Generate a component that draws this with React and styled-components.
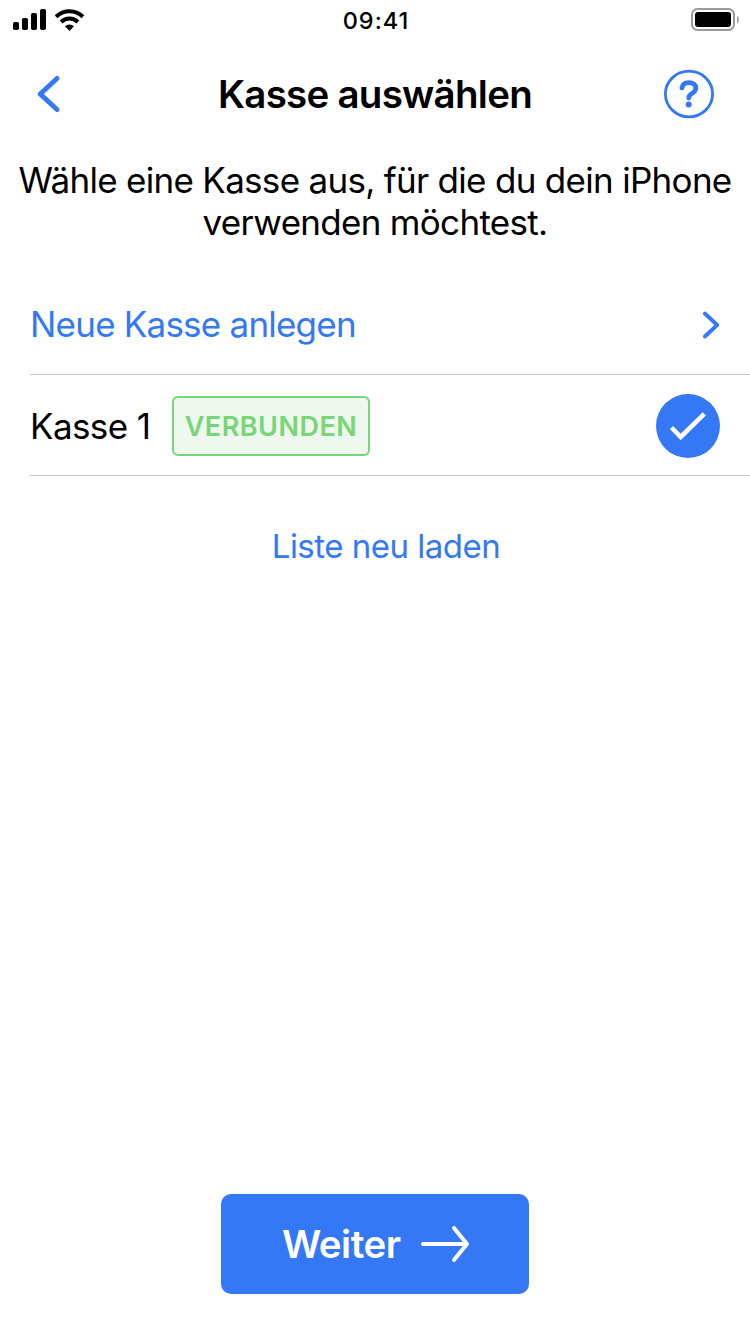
import styled, { createGlobalStyle } from 'styled-components';

const blue = '#3478f6';

const GlobalStyle = createGlobalStyle`
	* {
		box-sizing: border-box;
	}

	body {
		margin: 0;
		background-color: #fff;
		color: #000;
		font-family: Inter, "Liberation Sans", sans-serif;
	}
`;

const Screen = styled.div`
	display: flex;
	flex-direction: column;
	width: 750px;
	height: 1334px;
	overflow: hidden;
`;

const StatusBar = styled.div`
	display: grid;
	grid-template-columns: 1fr auto 1fr;
	align-items: center;
	height: 40px;
	padding: 0 11px 0 13px;
`;

const Signal = styled.div`
	display: flex;
	align-items: center;
	gap: 8px;
`;

const Time = styled.div`
	padding-top: 2px;
	font-size: 23.5px;
	font-weight: 500;
	line-height: 28px;
	letter-spacing: 1px;
`;

const Battery = styled.svg`
	justify-self: end;
`;

const Header = styled.header`
	display: flex;
	align-items: center;
	justify-content: space-between;
	height: 108px;
	padding: 0 36px;
`;

const IconButton = styled.button`
	display: flex;
	width: 50px;
	padding: 0;
	background: none;
	border: none;
	color: ${blue};
`;

const Title = styled.h1`
	margin: 0;
	font-size: 38.5px;
	font-weight: 600;
	letter-spacing: -0.74px;
`;

const Intro = styled.p`
	margin: 0;
	padding-top: 11px;
	font-size: 35px;
	line-height: 42px;
	letter-spacing: -0.7px;
	text-align: center;
	white-space: nowrap;
`;

const List = styled.div`
	margin: 31px 0 0 30px;
`;

const Row = styled.div`
	display: flex;
	align-items: center;
	height: 101px;
	padding: 2px 30px 0 0;
	border-bottom: 1px solid #c6c6c8;
	color: ${props => props.$link ? blue : '#000'};
	font-size: 35px;
	letter-spacing: ${props => props.$link ? '-0.78px' : '-0.6px'};

	> svg {
		margin-left: auto;
	}
`;

const Name = styled.span`
	min-width: 122px;
	padding-bottom: ${props => props.$link ? '2px' : '0'};
`;

const Badge = styled.span`
	display: flex;
	align-items: center;
	justify-content: center;
	width: 198px;
	height: 60px;
	margin-left: 20px;
	background-color: #eef8ee;
	border: 2px solid #77d675;
	border-radius: 6px;
	color: #77d675;
	font-size: 27px;
	font-weight: 600;
	letter-spacing: 0.5px;
`;

const Reload = styled.button`
	align-self: center;
	margin: 49px 0 0 22px;
	padding: 0;
	background: none;
	border: none;
	color: ${blue};
	font-family: inherit;
	font-size: 33px;
	line-height: 42px;
	letter-spacing: -0.5px;
`;

const NextButton = styled.button`
	display: flex;
	align-items: center;
	align-self: center;
	justify-content: space-between;
	width: 308px;
	height: 100px;
	margin: auto 0 40px;
	padding: 0 59px 0 61px;
	background-color: ${blue};
	border: none;
	border-radius: 10px;
	color: #fff;
	font-family: inherit;
	font-size: 38.5px;
	font-weight: 600;
	letter-spacing: -0.5px;
`;

const App = () => {
	return (
		<>
			<GlobalStyle />
			<Screen>
				<StatusBar>
					<Signal>
						<svg width="34" height="22" fill="currentColor">
							<rect x="0" y="13" width="6" height="8" rx="1.8"></rect>
							<rect x="9" y="9" width="6" height="12" rx="1.8"></rect>
							<rect x="18" y="4" width="6" height="17" rx="1.8"></rect>
							<rect x="27" y="0" width="6" height="21" rx="1.8"></rect>
						</svg>
						<svg width="30" height="22" fill="none" stroke="currentColor" strokeWidth="4">
							<path d="M1.1 7.8a19.2 19.2 0 0 1 26.8 0"></path>
							<path d="M6.1 13a12 12 0 0 1 16.8 0"></path>
							<path d="M10 17.2a6.6 6.6 0 0 1 9 0L14.5 21.9z" fill="currentColor" stroke="none"></path>
						</svg>
					</Signal>
					<Time>09:41</Time>
					<Battery width="49" height="24">
						<rect x="2" y="1" width="42" height="21" rx="5.5" fill="none" stroke="#9a9a9a" strokeWidth="2"></rect>
						<rect x="5" y="4" width="36" height="15" rx="3" fill="#000"></rect>
						<path d="M47 8c2.4 1 2.4 6.5 0 7.5z" fill="#9a9a9a"></path>
					</Battery>
				</StatusBar>
				<Header>
					<IconButton aria-label="Zurück">
						<svg width="26" height="40" fill="none" stroke="currentColor" strokeWidth="5" strokeLinecap="round" strokeLinejoin="round">
							<path d="M21 4.5 4.2 20 21 35.5"></path>
						</svg>
					</IconButton>
					<Title>Kasse auswählen</Title>
					<IconButton aria-label="Hilfe">
						<svg width="50" height="50" viewBox="0 0 50 50" fill="none" stroke="currentColor">
							<ellipse cx="25" cy="25" rx="23.6" ry="22.8" strokeWidth="2.8"></ellipse>
							<path d="M18 18.8c.6-3.4 3.2-5.2 6.8-5.2 4 0 7 2 7 5.5 0 2.5-1.4 3.9-3.6 5.2-2.3 1.4-3.4 2.3-3.4 4.7" strokeWidth="4.8" strokeLinecap="round"></path>
							<circle cx="24.7" cy="35.6" r="3" fill="currentColor" stroke="none"></circle>
						</svg>
					</IconButton>
				</Header>
				<Intro>
					Wähle eine Kasse aus, für die du dein iPhone<br />
					verwenden möchtest.
				</Intro>
				<List>
					<Row $link>
						<Name $link>Neue Kasse anlegen</Name>
						<svg width="18" height="28" fill="none" stroke="currentColor" strokeWidth="3.8" strokeLinecap="round" strokeLinejoin="round">
							<path d="M2.9 2.5 15.2 14 2.9 25.5"></path>
						</svg>
					</Row>
					<Row>
						<Name>Kasse 1</Name>
						<Badge>VERBUNDEN</Badge>
						<svg width="64" height="64">
							<circle cx="32" cy="32" r="32" fill={blue}></circle>
							<path d="m15.5 33.5 9.2 9.5 23.6-23.2" fill="none" stroke="#fff" strokeWidth="4.6"></path>
						</svg>
					</Row>
				</List>
				<Reload>Liste neu laden</Reload>
				<NextButton>
					Weiter
					<svg width="49" height="38" fill="none" stroke="currentColor" strokeWidth="4" strokeLinecap="round" strokeLinejoin="round">
						<path d="M2 19h44M33 3 46 19 33 35"></path>
					</svg>
				</NextButton>
			</Screen>
		</>
	);
}

export default App;
